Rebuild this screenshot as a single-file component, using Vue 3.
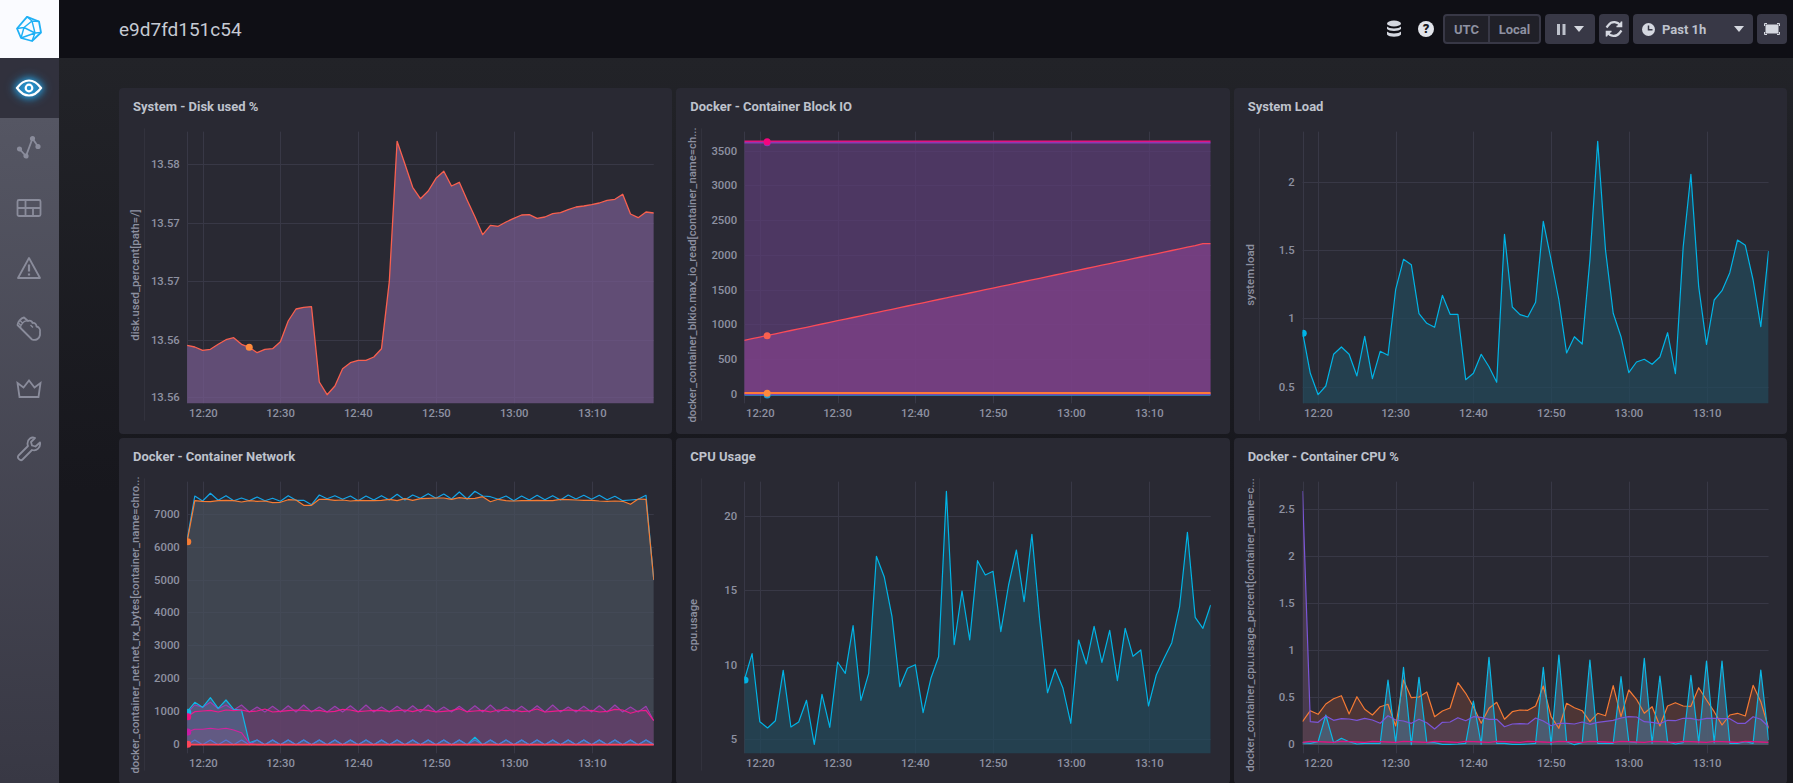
<script setup>
const disk = [796,801,811,808,793,779,773,793,802,818,808,806,785,723,687,682,680,906,944,918,866,848,841,841,831,806,605,184,252,322,356,333,295,274,318,307,360,410,464,436,439,426,415,405,404,415,411,401,398,389,381,378,374,369,361,358,343,402,413,396,399]
const load = [755,880,944,918,823,801,823,888,769,896,814,826,628,538,554,701,730,742,646,703,703,899,880,823,860,907,463,681,704,711,667,424,540,660,819,770,792,540,184,510,700,770,878,846,838,853,831,758,881,500,283,620,793,660,632,578,480,496,600,740,513]
const cpu = [750,671,875,894,872,721,891,876,811,943,793,892,696,730,587,811,730,379,440,560,770,715,704,848,745,680,184,644,483,630,392,435,424,605,465,360,515,313,570,788,717,775,880,630,702,589,697,601,752,595,679,660,828,735,685,638,530,307,562,595,525]
const netBlue = [330,198,213,190,211,197,212,204,212,201,212,205,214,197,211,211,224,195,206,197,208,198,212,198,210,197,210,193,210,195,205,191,205,192,207,186,207,184,198,200,208,198,212,198,210,196,209,197,210,195,207,196,208,196,209,199,212,210,208,196,450]
const netOrange = [335,212,214,215,212,211,212,216,212,214,213,218,217,209,210,226,226,208,208,211,210,213,211,212,212,211,208,212,206,211,206,205,204,204,208,203,206,205,200,215,208,212,213,212,212,211,212,212,208,209,210,211,211,213,214,213,214,223,207,208,450]
const lower = Array.from({ length: 61 }, (_, i) => (i === 60 ? 872 : i < 7 ? [850, 825, 832, 817, 836, 825, 840][i] : i % 2 ? 824 + (i * 7) % 8 : 846 - (i * 3) % 6))
const pink = Array.from({ length: 61 }, (_, i) => (i === 0 ? 860 : i === 60 ? 872 : i === 57 ? 850 : 840 + ((i * 5) % 7) - (i % 5 === 0 ? 4 : 0)))
const zig = Array.from({ length: 61 }, (_, i) => (i % 2 ? 930 : 944))
const netCyan = [845,817,832,803,835,810,838,840,938].concat(zig.slice(9)).map((v, i) => (i === 37 ? 922 : v))
const magenta = [905,898,898,895,898,895,900,908,940].concat(Array.from({ length: 52 }, () => 944))
const flat = (v) => Array.from({ length: 61 }, () => v)
const ramp = Array.from({ length: 61 }, (_, i) => (i >= 59 ? 491 : 781 - i * 4.9))
const cCyan = [938,940,935,855,938,925,935,942,940,940,940,750,938,712,944,742,938,938,943,943,942,940,813,943,682,940,940,943,943,942,940,712,944,675,935,944,938,690,940,940,940,740,935,938,685,940,738,936,942,938,736,938,693,938,693,940,940,935,940,720,930]
const cOrange = [875,842,853,822,806,797,852,800,838,855,830,823,888,750,803,801,786,860,843,834,758,790,830,880,835,817,868,845,840,841,828,768,860,895,820,833,842,875,850,857,767,860,780,808,850,830,888,828,818,828,829,773,810,845,885,855,850,858,766,815,895]
const cPurple = [183,875,877,858,871,866,867,871,865,870,880,857,870,873,880,868,878,897,877,876,863,872,860,862,868,868,890,882,881,882,864,873,887,880,880,882,876,883,877,874,871,864,860,861,875,877,881,871,872,865,865,870,865,865,866,866,880,880,860,868,890]
const cPink = Array.from({ length: 61 }, (_, i) => 937 - ((i * 7) % 4))

const xs1 = [257, 469, 683, 898, 1112, 1327]
const xs2 = [253, 469, 687, 905, 1124, 1342]
const xs3 = [246, 461, 678, 895, 1111, 1329]
const labels = ['12:20', '12:30', '12:40', '12:50', '13:00', '13:10']

const defs = [
  { title: 'System - Disk used %', ox: -9, s: 2.751, l: 212, r: 1496, base: 970, axis: 93, ylx: 70, yl: 'disk.used_percent[path=/]', lab: 192,
    xt: xs1, yt: [['13.58', 253], ['13.57', 428], ['13.57', 602], ['13.56', 779], ['13.56', 951]],
    areas: [[disk, '#795c91']], lines: [[disk, '#f9604f', 1.3]], dots: [[383, 802, '#ff8a3c']] },
  { title: 'Docker - Container Block IO', ox: -6, s: 2.8, l: 208, r: 1514, base: 945, axis: 88, ylx: 63, yl: 'docker_container_blkio.max_io_read[container_name=ch...', lab: 188,
    xt: xs2, yt: [['3500', 213], ['3000', 316], ['2500', 421], ['2000', 526], ['1500', 631], ['1000', 733], ['500', 838], ['0', 942]],
    areas: [[flat(186), '#5c3d76'], [ramp, '#83418b']],
    lines: [[flat(188), '#8b3ab4', 1.5], [flat(184), '#e0157f', 1.5], [ramp, '#fb4b58', 1.3], [flat(945), '#2f8fd0', 1.5], [flat(942), '#8b3ab4', 1.5], [flat(939), '#ff7a36', 2]],
    dots: [[272, 188, '#8b3ab4'], [272, 185, '#f5047f'], [272, 767, '#f9604f'], [272, 945, '#1f9ad0'], [272, 940, '#ff8a3c']] },
  { title: 'System Load', ox: -4, s: 2.785, l: 202, r: 1500, base: 970, axis: 82, ylx: 58, yl: 'system.load', lab: 180,
    xt: xs3, yt: [['2', 307], ['1.5', 511], ['1', 715], ['0.5', 922]],
    areas: [[load, '#224a5b']], lines: [[load, '#00b4e6', 1.2]], dots: [[204, 760, '#00b4e6']] },
  { title: 'Docker - Container Network', ox: -9, s: 2.751, l: 212, r: 1496, base: 944, axis: 93, ylx: 70, yl: 'docker_container_net.net_rx_bytes[container_name=chro...', lab: 192,
    xt: xs1, yt: [['7000', 253], ['6000', 352], ['5000', 449], ['4000', 547], ['3000', 646], ['2000', 745], ['1000', 844], ['0', 942]],
    areas: [[netOrange, '#48515c'], [lower, '#6b3e6f'], [netCyan, '#51658c'], [magenta, '#685a84']],
    lines: [[netBlue, '#14a5e8', 1.2], [netOrange, '#f57c34', 1.2], [lower, '#9a3fb0', 1.1], [netCyan, '#0fb6e6', 1.2], [zig, '#5477d8', 1.2], [pink, '#ee1a8c', 1.2], [magenta, '#d321a0', 1.1], [flat(944), '#ff4558', 1.8]],
    dots: [[214, 335, '#f57c34'], [214, 847, '#0fb6e6'], [214, 860, '#f0127f'], [214, 906, '#c81ba6'], [214, 943, '#ff4558']] },
  { title: 'CPU Usage', ox: -6, s: 2.8, l: 208, r: 1514, base: 970, axis: 88, ylx: 65, yl: 'cpu.usage', lab: 188,
    xt: xs2, yt: [['20', 259], ['15', 481], ['10', 706], ['5', 928]],
    areas: [[cpu, '#224a5b']], lines: [[cpu, '#00b4e6', 1.2]], dots: [[210, 750, '#00b4e6']] },
  { title: 'Docker - Container CPU %', ox: -4, s: 2.785, l: 202, r: 1500, base: 944, axis: 82, ylx: 58, yl: 'docker_container_cpu.usage_percent[container_name=c...', lab: 180,
    xt: xs3, yt: [['2.5', 238], ['2', 379], ['1.5', 520], ['1', 661], ['0.5', 802], ['0', 942]],
    areas: [[cOrange, '#5c3a36'], [cPurple, '#564359'], [cCyan, '#49687f']],
    lines: [[cOrange, '#f57a34', 1.2], [cCyan, '#0bb8e6', 1.2], [cPurple, '#7a55d8', 1.2], [cPink, '#e0147f', 1.3]], dots: [] },
]

const charts = defs.map((d, n) => {
  const X = (z) => d.ox + z / d.s
  const Y = (z) => z / 3 - 42
  const step = (d.r - d.l) / 60
  const pts = (ys) => ys.map((y, i) => `${X(d.l + i * step).toFixed(1)},${Y(y).toFixed(1)}`).join(' ')
  const crisp = (v) => Math.round(v) + 0.5
  return {
    id: `clip${n}`,
    title: d.title,
    yl: d.yl,
    clip: { x: X(d.l), y: Y(155), w: X(d.r) - X(d.l), h: Y(972) - Y(155) },
    axisX: crisp(X(d.axis)),
    axisTop: Y(145),
    axisBottom: Y(1022),
    left: X(d.l),
    right: X(d.r),
    leftLine: crisp(X(d.l)),
    top: Y(155),
    bottom: Y(970),
    ylX: X(d.ylx),
    ylY: Y(585),
    labX: X(d.lab),
    xLabY: Y(1000),
    vgrid: d.xt.map((x, i) => ({ x: crisp(X(x)), lx: X(x), t: labels[i] })),
    hgrid: d.yt.map(([t, y]) => ({ t, y: crisp(Y(y)) })),
    areas: d.areas.map(([ys, fill]) => ({
      fill,
      points: `${X(d.l).toFixed(1)},${Y(d.base).toFixed(1)} ${pts(ys)} ${X(d.r).toFixed(1)},${Y(d.base).toFixed(1)}`,
    })),
    lines: d.lines.map(([ys, stroke, w]) => ({ stroke, w, points: pts(ys) })),
    dots: d.dots.map(([x, y, c]) => ({ x: X(x), y: Y(y), c })),
  }
})
</script>

<template>
  <div class="app">
    <nav class="side">
      <div class="logo">
        <svg width="26" height="26" viewBox="0 0 26 26" fill="none" stroke="#1fb0f5" stroke-width="1.8" stroke-linejoin="round">
          <path d="M11 .8 23 5.500 25 16.500 16 25 5 22 1 12.500Z" />
          <path d="M11 .8 16 5 23 5.500M16 5 8 11.500 1 12.500M16 5 19 17 25 16.500M8 11.500 19 17 16 25M8 11.500 5 22M19 17 5 22" stroke-width="1.400" />
        </svg>
      </div>
      <div class="item active">
        <svg class="eye" width="28" height="20" viewBox="0 0 28 20" fill="none" stroke="#fff">
          <path d="M2 10C6 4.500 10 2.500 14 2.500S22 4.500 26 10C22 15.500 18 17.500 14 17.500S6 15.500 2 10Z" stroke-width="2.200" />
          <circle cx="14" cy="10" r="3.300" stroke-width="2.200" />
        </svg>
      </div>
      <div class="item">
        <svg width="26" height="26" viewBox="0 0 26 26" fill="#8a8c9b" stroke="#8a8c9b" stroke-width="1.800">
          <path d="M3.500 14 10 21 16.500 3.500 22 11.500" fill="none" />
          <circle cx="3.500" cy="14" r="1.700" /><circle cx="10" cy="21" r="1.700" /><circle cx="16.500" cy="3.500" r="1.700" /><circle cx="22" cy="11.500" r="1.700" />
        </svg>
      </div>
      <div class="item">
        <svg width="26" height="20" viewBox="0 0 26 20" fill="none" stroke="#8a8c9b" stroke-width="1.800">
          <rect x="1.500" y="2" width="23" height="16" rx="1.500" />
          <path d="M1.500 10H24.500M9.500 2V18M17 10V18" />
        </svg>
      </div>
      <div class="item">
        <svg width="26" height="24" viewBox="0 0 26 24" fill="none" stroke="#8a8c9b" stroke-width="1.800" stroke-linejoin="round">
          <path d="M13 2 24 22H2Z" />
          <path d="M13 8.500V15.500M13 17.500V19.500" stroke-width="2.200" />
        </svg>
      </div>
      <div class="item">
        <svg width="26" height="26" viewBox="0 0 26 26" fill="none" stroke="#8a8c9b" stroke-width="1.800" stroke-linejoin="round">
          <path d="M1.500 9C1.500 6 5 2 8 1.500L12 5C13.500 4 16 5 16.500 7 18.500 6.500 20.500 8 20.500 10.500 23 11 24.500 13.500 24 16V19C23.500 22.500 20 25 16 23.500Z" />
          <path d="M4.500 12C4 9 8 4.500 11 5M4 4.500 6.500 7M2.500 7 5 9.500M14.500 9 17 11.500" stroke-width="1.300" />
        </svg>
      </div>
      <div class="item">
        <svg width="26" height="20" viewBox="0 0 26 20" fill="none" stroke="#8a8c9b" stroke-width="1.800" stroke-linejoin="miter">
          <path d="M1.500 4 7.500 8.500 13 1.500 18.500 8.500 24.500 4 22.500 18H3.500Z" />
        </svg>
      </div>
      <div class="item">
        <svg width="26" height="26" viewBox="0 0 26 26" fill="none" stroke="#8a8c9b" stroke-width="1.800" stroke-linejoin="round">
          <path d="M24 6.500 19.500 10.500 16 9.500 15 6 19 2C15.500.500 11.500 3 11.500 7.500 11.500 8.500 11.700 9.500 12 10L2.500 19.500C.5 22 4.500 25.500 6.500 23.500L16 14C20.500 15.500 25 11.500 24 6.500Z" />
        </svg>
      </div>
    </nav>

    <div class="content">
      <header class="top">
        <h1 class="name">e9d7fd151c54</h1>
        <div class="tools">
          <svg class="db" width="16" height="18" viewBox="0 0 16 18" fill="#d5d8e0">
            <ellipse cx="8" cy="3.500" rx="7" ry="3" />
            <path d="M1 6.500C3 9 13 9 15 6.500V9C13 11.500 3 11.500 1 9Z" />
            <path d="M1 11.500C3 14 13 14 15 11.500V14.500C13 17.500 3 17.500 1 14.500Z" />
          </svg>
          <span class="help">?</span>
          <div class="toggle"><span class="seg">UTC</span><span class="seg">Local</span></div>
          <button class="btn pause">
            <svg width="9" height="11" viewBox="0 0 9 11" fill="#bec2cc"><rect width="3" height="11" /><rect x="5.500" width="3" height="11" /></svg>
            <i class="caret"></i>
          </button>
          <button class="btn square">
            <svg width="18" height="18" viewBox="0 0 18 18" fill="none" stroke="#d5d8e0" stroke-width="2.200">
              <path d="M15.500 6A7 7 0 0 0 3.500 5L1.500 7.500M2.500 12A7 7 0 0 0 14.500 13L16.500 10.500" />
              <path d="M16.500 1.500V6.500H11.500M1.500 16.500V11.500H6.500" stroke-width="1.600" fill="#d5d8e0" />
            </svg>
          </button>
          <button class="btn time">
            <svg width="13" height="13" viewBox="0 0 13 13"><circle cx="6.500" cy="6.500" r="6.500" fill="#d5d8e0" /><path d="M6.500 2.500V6.800H10.500" fill="none" stroke="#383846" stroke-width="1.500" /></svg>
            <span class="time-label">Past 1h</span>
            <i class="caret"></i>
          </button>
          <button class="btn square">
            <svg width="16" height="12" viewBox="0 0 16 12"><rect x="1.500" y="1.500" width="13" height="9" fill="#d5d8e0" /><path d="M.5 3V.5H3M13 .5H15.500V3M15.500 9V11.500H13M3 11.500H.5V9" fill="none" stroke="#d5d8e0" /></svg>
          </button>
        </div>
      </header>

      <main class="page">
        <section v-for="c in charts" :key="c.id" class="panel">
          <h2 class="title">{{ c.title }}</h2>
          <svg class="chart">
            <defs>
              <clipPath :id="c.id"><rect :x="c.clip.x" :y="c.clip.y" :width="c.clip.w" :height="c.clip.h" /></clipPath>
            </defs>
            <line class="axis" :x1="c.axisX" :x2="c.axisX" :y1="c.axisTop" :y2="c.axisBottom" />
            <line class="grid" :x1="c.leftLine" :x2="c.leftLine" :y1="c.top" :y2="c.bottom" />
            <line v-for="v in c.vgrid" :key="v.t" class="grid" :x1="v.x" :x2="v.x" :y1="c.top" :y2="c.bottom" />
            <line v-for="h in c.hgrid" :key="h.y" class="grid" :x1="c.left" :x2="c.right" :y1="h.y" :y2="h.y" />
            <g :clip-path="`url(#${c.id})`">
              <polygon v-for="(a, i) in c.areas" :key="i" class="area" :points="a.points" :fill="a.fill" />
              <polyline v-for="(l, i) in c.lines" :key="i" class="line" :points="l.points" :stroke="l.stroke" :stroke-width="l.w" />
              <circle v-for="(d, i) in c.dots" :key="i" :cx="d.x" :cy="d.y" r="3.500" :fill="d.c" />
            </g>
            <text v-for="h in c.hgrid" :key="h.y" class="tick" text-anchor="end" dominant-baseline="central" :x="c.labX" :y="h.y">{{ h.t }}</text>
            <text v-for="v in c.vgrid" :key="v.t" class="tick" text-anchor="middle" dominant-baseline="central" :x="v.lx" :y="c.xLabY">{{ v.t }}</text>
            <text class="ylabel" text-anchor="middle" dominant-baseline="central" :transform="`translate(${c.ylX} ${c.ylY}) rotate(-90)`">{{ c.yl }}</text>
          </svg>
        </section>
      </main>
    </div>
  </div>
</template>

<style>
html, body { margin: 0; background: #18181e; overflow: hidden; }
</style>

<style scoped>
.app { display: flex; width: 1793px; height: 783px; overflow: hidden; font-family: Roboto, "Liberation Sans", sans-serif; }
.side { width: 59px; flex: none; display: flex; flex-direction: column; background: linear-gradient(#555663 118px, #383844 100%); }
.logo { height: 58px; background: #fafbff; display: flex; align-items: center; justify-content: center; padding-right: 1px; box-sizing: border-box; }
.item { height: 60.2px; flex: none; display: flex; align-items: center; justify-content: center; padding-right: 1px; box-sizing: border-box; }
.active { height: 60px; background: #31313d; }
.eye { filter: drop-shadow(0 0 3px #22adf6) drop-shadow(0 0 5px #22adf6); }
.content { flex: 1; min-width: 0; display: flex; flex-direction: column; }
.top { height: 58px; flex: none; display: flex; align-items: center; justify-content: space-between; background: #0f0f15; padding: 0 6px 0 60px; }
.name { margin: 0; font-size: 19px; font-weight: 400; color: #c6cad3; }
.tools { display: flex; align-items: center; gap: 4px; }
.db { margin-right: 12px; }
.help { width: 16px; height: 16px; border-radius: 50%; background: #e2e4ea; color: #17171d; font-size: 13px; font-weight: 900; line-height: 16px; text-align: center; margin-right: 5px; }
.toggle { display: flex; height: 30px; box-sizing: border-box; border: 2px solid #383846; border-radius: 4px; background: #202028; }
.seg { display: flex; align-items: center; justify-content: center; font-size: 13px; font-weight: 700; color: #8e91a1; width: 43px; }
.seg + .seg { border-left: 2px solid #383846; width: 49px; }
.btn { height: 30px; border: 0; border-radius: 4px; background: #383846; display: flex; align-items: center; justify-content: center; padding: 0; font-family: inherit; }
.pause { width: 50px; gap: 8px; }
.square { width: 30px; }
.time { width: 120px; justify-content: flex-start; padding: 0 9px; }
.time-label { margin-left: 7px; font-size: 13px; font-weight: 700; color: #bec2cc; flex: 1; text-align: left; }
.caret { width: 0; height: 0; border: 5px solid transparent; border-top: 6px solid #d5d8e0; border-bottom: 0; }
.page { flex: 1; min-height: 0; display: grid; grid-template-columns: repeat(3, 1fr); grid-auto-rows: 346px; gap: 4px; padding: 30px 6px 0 60px; background: linear-gradient(#222328, #17171d 60%); }
.panel { background: #292933; border-radius: 4px; display: flex; flex-direction: column; min-width: 0; }
.title { height: 34px; flex: none; margin: 0; padding: 0 14px; font-size: 13px; font-weight: 700; line-height: 37px; color: #bec2cc; }
.chart { display: block; width: 100%; height: 312px; }
.axis { stroke: #32323d; stroke-width: 1; }
.grid { stroke: #383846; stroke-width: 1; }
.area { stroke: none; fill-opacity: .7; }
.line { fill: none; stroke-linejoin: round; }
.tick { font-size: 11.3px; font-weight: 500; fill: #8e91a1; }
.ylabel { font-size: 11.3px; font-weight: 500; fill: #8e91a1; }
</style>
